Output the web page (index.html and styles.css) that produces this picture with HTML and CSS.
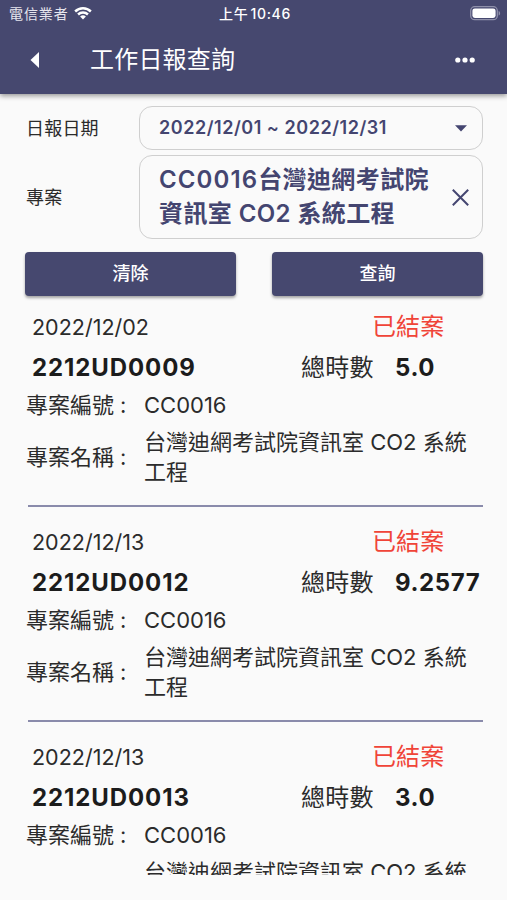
FILE: index.html
```html
<!doctype html>
<html lang="zh-Hant">
<head>
    <meta charset="utf-8">
    <title>工作日報查詢</title>
    <link rel="stylesheet" href="styles.css">
</head>
<body>
    <div class="page">
        <div class="header">
            <div class="status">
                <div class="carrier">
                    <span>電信業者</span>
                    <svg class="wifi" width="18" height="14" viewBox="0 0 18 14">
                        <path d="M0.3 4.6a12.5 12.5 0 0 1 17.4 0l-1.7 1.8a10 10 0 0 0-14 0z"/>
                        <path d="M3.2 7.6a8.4 8.4 0 0 1 11.6 0l-1.7 1.8a6 6 0 0 0-8.2 0z"/>
                        <path d="M6.1 10.6a4.2 4.2 0 0 1 5.8 0L9 13.6z"/>
                    </svg>
                </div>
                <div class="time"><span class="ampm">上午</span>10:46</div>
                <svg class="battery" width="31" height="15" viewBox="0 0 31 15">
                    <rect class="shell" x="0.7" y="0.7" width="26.6" height="13" rx="4"/>
                    <rect x="2.4" y="2.4" width="23.2" height="9.6" rx="2.4"/>
                    <path class="tip" d="M28.6 4.9c2 .7 2 3.9 0 4.6z"/>
                </svg>
            </div>
            <div class="bar">
                <svg class="back" width="9" height="16" viewBox="0 0 9 16"><path d="M9 0v16L0.5 8z"/></svg>
                <h1>工作日報查詢</h1>
                <svg class="more" width="20" height="6" viewBox="0 0 20 6">
                    <circle cx="2.8" cy="3" r="2.6"/>
                    <circle cx="10" cy="3" r="2.6"/>
                    <circle cx="17.2" cy="3" r="2.6"/>
                </svg>
            </div>
        </div>
        <div class="search">
            <div class="field">
                <label>日報日期</label>
                <div class="box date-box">
                    <span>2022/12/01 ~ 2022/12/31</span>
                    <svg class="arrow" width="12" height="7" viewBox="0 0 12 7"><path d="M0 0.3h12L6 6.6z"/></svg>
                </div>
            </div>
            <div class="field">
                <label>專案</label>
                <div class="box case-box">
                    <span><b>CC0016</b>台灣迪網考試院<br>資訊室 CO2 系統工程</span>
                    <svg class="close" width="17" height="17" viewBox="0 0 17 17"><path d="M0.8 0.8l15.4 15.4M16.2 0.8L0.8 16.2"/></svg>
                </div>
            </div>
            <div class="btns">
                <button>清除</button>
                <button>查詢</button>
            </div>
        </div>
        <div class="list">
            <div class="item">
                <div class="row">
                    <span class="date">2022/12/02</span>
                    <span class="state">已結案</span>
                </div>
                <div class="row total">
                    <span class="code">2212UD0009</span>
                    <span class="hours">總時數</span>
                    <span class="num">5.0</span>
                </div>
                <div class="info">
                    <span class="name">專案編號<i>:</i></span>
                    <span>CC0016</span>
                </div>
                <div class="info long">
                    <span class="name">專案名稱<i>:</i></span>
                    <span>台灣迪網考試院資訊室 CO2 系統<br>工程</span>
                </div>
            </div>
            <div class="item">
                <div class="row">
                    <span class="date">2022/12/13</span>
                    <span class="state">已結案</span>
                </div>
                <div class="row total">
                    <span class="code">2212UD0012</span>
                    <span class="hours">總時數</span>
                    <span class="num">9.2577</span>
                </div>
                <div class="info">
                    <span class="name">專案編號<i>:</i></span>
                    <span>CC0016</span>
                </div>
                <div class="info long">
                    <span class="name">專案名稱<i>:</i></span>
                    <span>台灣迪網考試院資訊室 CO2 系統<br>工程</span>
                </div>
            </div>
            <div class="item">
                <div class="row">
                    <span class="date">2022/12/13</span>
                    <span class="state">已結案</span>
                </div>
                <div class="row total">
                    <span class="code">2212UD0013</span>
                    <span class="hours">總時數</span>
                    <span class="num">3.0</span>
                </div>
                <div class="info">
                    <span class="name">專案編號<i>:</i></span>
                    <span>CC0016</span>
                </div>
                <div class="info long last">
                    <span class="name"></span>
                    <span>台灣迪網考試院資訊室 CO2 系統</span>
                </div>
            </div>
        </div>
    </div>
</body>
</html>
```
FILE: styles.css
```css
* {
    box-sizing: border-box;
}
body, h1 {
    margin: 0;
}
body {
    background: #fafafa;
    color: #2b2b2b;
    font-family: Inter, "Noto Sans CJK TC", sans-serif;
}
.page {
    display: flex;
    flex-direction: column;
    height: 900px;
    padding-bottom: 25px;
    overflow: hidden;
}
/* 頂部 */
.header {
    height: 94px;
    flex: none;
    background: #46486f;
    color: #fff;
    fill: #fff;
    box-shadow: 0 2px 5px rgba(0, 0, 0, 0.4);
}
.status {
    display: grid;
    grid-template-columns: 1fr auto 1fr;
    align-items: center;
    height: 27px;
    padding: 0 6px 0 9px;
    font-size: 14px;
    line-height: 27px;
}
.carrier {
    display: flex;
    align-items: center;
    gap: 5px;
    letter-spacing: 0.9px;
    color: #e6e6ee;
}
.carrier .wifi {
    margin-top: -2px;
}
.time {
    font-weight: 500;
    letter-spacing: 0.7px;
    white-space: nowrap;
}
.ampm {
    margin-right: 2px;
}
.battery {
    justify-self: end;
}
.battery .shell {
    fill: none;
    stroke: #8f90aa;
    stroke-width: 1.3;
}
.battery .tip {
    fill: #8f90aa;
}
.bar {
    display: flex;
    align-items: center;
    height: 65px;
    padding: 0 32px 0 30px;
}
.bar h1 {
    flex: 1;
    margin-left: 51px;
    font-size: 24px;
    font-weight: 400;
    letter-spacing: 0.2px;
    line-height: 66px;
}
/* 查詢條件 */
.search {
    flex: none;
    height: 213px;
    padding: 12px 24px 0 25px;
}
.field {
    display: flex;
    align-items: center;
    margin-bottom: 5px;
}
.field label {
    width: 114px;
    padding: 0 0 2px 1px;
    font-size: 18px;
    letter-spacing: 0.2px;
}
.box {
    flex: 1;
    display: flex;
    align-items: center;
    justify-content: space-between;
    border: 1px solid #cfcfcf;
    border-radius: 13px;
    color: #444570;
    font-weight: 600;
    white-space: nowrap;
}
.date-box {
    height: 44px;
    padding: 0 15px 2px 19px;
    font-size: 18px;
    letter-spacing: 0.53px;
}
.date-box .arrow {
    margin-top: 2px;
    fill: #444570;
}
.case-box {
    height: 84px;
    padding: 0 13px 0 19px;
    font-size: 24px;
    letter-spacing: 0.4px;
    line-height: 34px;
}
.case-box b {
    font-weight: 600;
    letter-spacing: 1.1px;
}
.close {
    fill: none;
    stroke: #444570;
    stroke-width: 2;
}
.btns {
    display: flex;
    gap: 36px;
    margin-top: 13px;
}
.btns button {
    flex: 1;
    height: 44px;
    padding: 0;
    border: 0;
    border-radius: 4px;
    background: #46486f;
    color: #fff;
    font: 500 18px/44px Inter, "Noto Sans CJK TC", sans-serif;
    box-shadow: 0 2px 3px rgba(0, 0, 0, 0.35);
}
/* 日報列表 */
.list {
    flex: 1;
    min-height: 0;
    padding: 0 24px 0 26px;
    overflow: hidden;
}
.item {
    height: 215px;
    white-space: nowrap;
}
.item:after {
    content: "";
    display: block;
    height: 2px;
    margin: 18px 0 0 2px;
    background: #8a8bab;
}
.row {
    display: flex;
    align-items: center;
    height: 40px;
    padding-left: 6px;
    font-size: 24px;
    line-height: 40px;
}
.total {
    padding-top: 1px;
}
.date {
    width: 340px;
    font-size: 21.5px;
}
.state {
    letter-spacing: 0.1px;
    color: #f04438;
}
.code {
    width: 269px;
    color: #1c1c1c;
    font-weight: 700;
    letter-spacing: 0.9px;
}
.hours {
    width: 94px;
    letter-spacing: 0.3px;
}
.num {
    color: #1c1c1c;
    font-weight: 700;
    letter-spacing: 0.6px;
}
.info {
    display: flex;
    align-items: center;
    height: 37px;
    padding-bottom: 2px;
    font-size: 22px;
    line-height: 30px;
}
.info .name {
    width: 118px;
}
.info i {
    margin-left: 6px;
    font-style: normal;
}
.long {
    height: 60px;
    margin-top: 3px;
    padding: 0;
}
.last {
    align-items: flex-start;
}
```
